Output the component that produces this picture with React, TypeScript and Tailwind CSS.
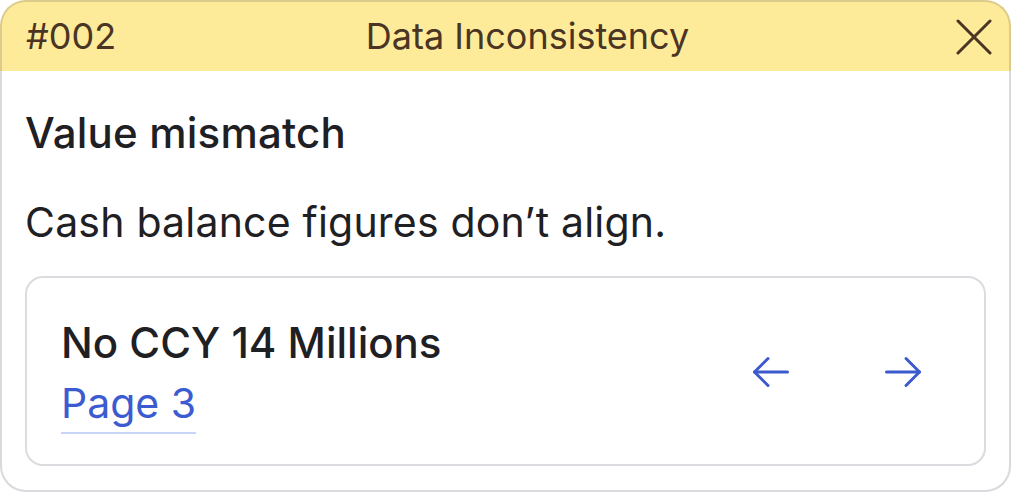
import React from 'react';

const ArrowLeft = () => (
  <svg width="38" height="32" viewBox="0 0 38 32" fill="none" stroke="currentColor" strokeWidth="3" strokeLinecap="round" strokeLinejoin="round">
    <path d="M16 2.5 2.5 16 16 29.5" />
    <path d="M2.5 16H35.5" />
  </svg>
);

const ArrowRight = () => (
  <svg width="38" height="32" viewBox="0 0 38 32" fill="none" stroke="currentColor" strokeWidth="3" strokeLinecap="round" strokeLinejoin="round">
    <path d="M22 2.5 35.5 16 22 29.5" />
    <path d="M35.5 16H2.5" />
  </svg>
);

const CloseIcon = () => (
  <svg width="38" height="36" viewBox="0 0 38 36" fill="none" stroke="currentColor" strokeWidth="3" strokeLinecap="round">
    <path d="M3 2 35 34" />
    <path d="M35 2 3 34" />
  </svg>
);

export default function App() {
  return (
    <div className="w-[1011px] h-[492px] bg-white flex flex-col font-['Inter',sans-serif]">
      {/* Header */}
      <div className="h-[71px] shrink-0 bg-[#feeb99] border-2 border-b-0 border-[#dccc8b] rounded-t-[26px] flex items-center justify-between pl-6 pr-4 text-[#4a3424]">
        <span className="text-[36px] leading-[52px] w-[200px] -mt-[2px]">#002</span>
        <span className="text-[36px] leading-[52px] -mt-[2px] ml-[36px]">Data Inconsistency</span>
        <div className="w-[200px] flex justify-end">
          <CloseIcon />
        </div>
      </div>

      {/* Body */}
      <div className="flex-1 border-2 border-t-0 border-[#d9d9de] rounded-b-[26px] px-[23px] pb-6 flex flex-col text-[#1f2023]">
        <h2 className="text-[42px] font-medium mt-[37px] leading-[50px] tracking-[0.2px]">Value mismatch</h2>
        <p className="text-[41px] mt-[39px] leading-[50px] tracking-[0.2px]">Cash balance figures don’t align.</p>

        <div className="mt-auto h-[190px] border-2 border-[#dcdce0] rounded-[18px] flex justify-between pl-[34px] pr-[62px] pt-[40px]">
          <div className="flex flex-col items-start">
            <span className="text-[42px] font-medium leading-[50px]">No CCY 14 Millions</span>
            <span className="text-[41px] text-[#3d5bd1] leading-[50px] mt-[10px] border-b-2 border-[#c9d5f7] pb-[4px]">
              Page 3
            </span>
          </div>
          <div className="flex items-center gap-[94px] text-[#3b5ad0] h-[108px]">
            <ArrowLeft />
            <ArrowRight />
          </div>
        </div>
      </div>
    </div>
  );
}
